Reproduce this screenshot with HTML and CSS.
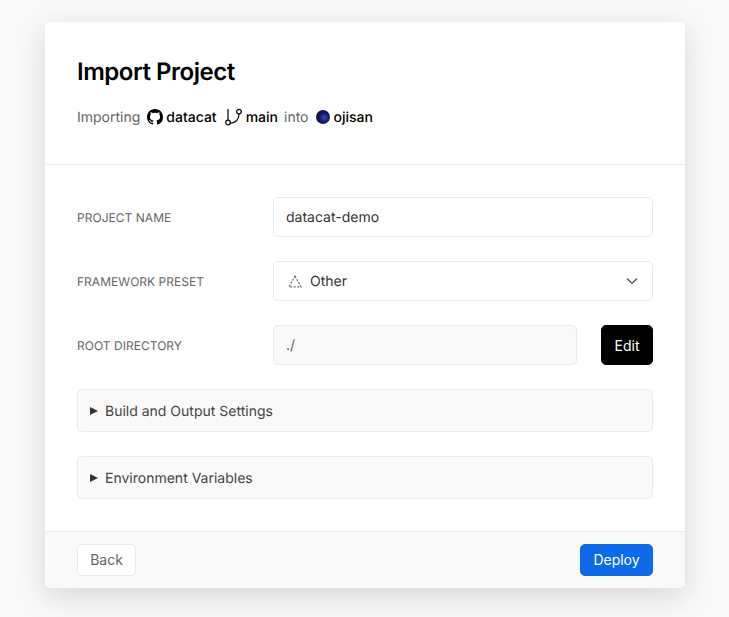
FILE: index.html
```html
<!DOCTYPE html>
<html lang="en">
<head>
<meta charset="utf-8">
<title>Import Project</title>
<link rel="stylesheet" href="styles.css">
</head>
<body>
<main class="card">
  <header class="head">
    <h1 class="title">Import Project</h1>
    <p class="meta">
      <span class="muted">Importing</span>
      <svg class="ic gh" viewBox="0 0 16 16" width="16" height="16"><path fill="#000" d="M8 0C3.58 0 0 3.58 0 8c0 3.54 2.29 6.53 5.47 7.59.4.07.55-.17.55-.38 0-.19-.01-.82-.01-1.49-2.01.37-2.53-.49-2.69-.94-.09-.23-.48-.94-.82-1.13-.28-.15-.68-.52-.01-.53.63-.01 1.08.58 1.23.82.72 1.21 1.87.87 2.33.66.07-.52.28-.87.51-1.07-1.78-.2-3.64-.89-3.64-3.95 0-.87.31-1.59.82-2.15-.08-.2-.36-1.02.08-2.12 0 0 .67-.21 2.2.82.64-.18 1.32-.27 2-.27s1.36.09 2 .27c1.53-1.04 2.2-.82 2.2-.82.44 1.1.16 1.92.08 2.12.51.56.82 1.27.82 2.15 0 3.07-1.87 3.75-3.65 3.95.29.25.54.73.54 1.48 0 1.07-.01 1.93-.01 2.2 0 .21.15.46.55.38A8.01 8.01 0 0 0 16 8c0-4.42-3.58-8-8-8z"/></svg>
      <b class="strong">datacat</b>
      <svg class="ic branch" viewBox="0 0 18 18" width="18" height="18" fill="none" stroke="#111" stroke-width="1.3"><circle cx="3" cy="14.5" r="2.3"/><circle cx="14" cy="3.6" r="2.3"/><path d="M3 12.2V1M5 15.4c5.2 0 9-3.8 9-9.5"/></svg>
      <b class="strong">main</b>
      <span class="muted">into</span>
      <span class="avatar"></span>
      <b class="strong">ojisan</b>
    </p>
  </header>

  <section class="form">
    <div class="row">
      <label class="label">PROJECT NAME</label>
      <div class="field">datacat-demo</div>
    </div>
    <div class="row">
      <label class="label">FRAMEWORK PRESET</label>
      <div class="field select">
        <svg class="tri" viewBox="0 0 14 13" width="14" height="13" fill="none" stroke="#666" stroke-width="1.2" stroke-dasharray="2 1.5"><path d="M7 1.2 13 11.8H1Z"/></svg>
        <span class="grow">Other</span>
        <svg class="chev" viewBox="0 0 12 8" width="12" height="8" fill="none" stroke="#555" stroke-width="1.2"><path d="M1 1.5 6 6.3l5-4.8"/></svg>
      </div>
    </div>
    <div class="row">
      <label class="label">ROOT DIRECTORY</label>
      <div class="field off">./</div>
      <button class="btn dark">Edit</button>
    </div>
    <div class="fold"><span class="arrow"></span>Build and Output Settings</div>
    <div class="fold"><span class="arrow"></span>Environment Variables</div>
  </section>

  <footer class="foot">
    <button class="btn light">Back</button>
    <button class="btn blue">Deploy</button>
  </footer>
</main>
</body>
</html>
```
FILE: styles.css
```css
* { box-sizing: border-box; }
html, body { margin: 0; height: 617px; overflow: hidden; }
body {
  background: #f9f9f9;
  font-family: Inter, "Liberation Sans", sans-serif;
  color: #333;
  font-size: 14px;
  padding: 22px 44px 0 45px;
  text-rendering: geometricPrecision;
}
.card {
  width: 640px;
  height: 566px;
  background: #fff;
  border-radius: 5px;
  box-shadow: 0 8px 30px rgba(0, 0, 0, 0.14);
  overflow: hidden;
  display: flex;
  flex-direction: column;
}
.head {
  height: 143px;
  padding: 32px 32px 0;
  border-bottom: 1px solid #eaeaea;
  flex: none;
}
.title {
  margin: 0;
  font-size: 24px;
  line-height: 36px;
  font-weight: 600;
  color: #000;
  letter-spacing: -0.47px;
}
.meta {
  margin: 18px 0 0;
  display: flex;
  align-items: center;
  height: 18px;
  font-size: 14px;
}
.muted { color: #666; }
.strong { font-weight: 500; color: #000; }
.ic { flex: none; }
.gh { margin: 0 3px 0 7px; }
.branch { margin: 0 3px 0 8px; }
.meta .muted + .avatar { margin-left: 8px; }
.meta .strong + .muted { margin-left: 6px; }
.avatar {
  width: 14px;
  height: 14px;
  border-radius: 50%;
  margin-right: 3px;
  background: radial-gradient(circle at 60% 55%, #3a4cc4 0, #1a1f6b 35%, #07071f 90%);
}
.form {
  flex: 1;
  padding: 32px 32px 0;
  display: flex;
  flex-direction: column;
}
.row {
  display: flex;
  align-items: center;
  height: 40px;
  margin-bottom: 24px;
}
.label {
  width: 196px;
  flex: none;
  font-size: 12px;
  color: #666;
  letter-spacing: 0.03px;
}
.field {
  flex: 1;
  height: 40px;
  border: 1px solid #eaeaea;
  border-radius: 5px;
  padding: 0 12px;
  display: flex;
  align-items: center;
  color: #333;
}
.select { padding-right: 14px; }
.grow { flex: 1; }
.tri { margin-right: 8px; margin-left: 2px; }
.off { background: #f9f9f9; color: #666; }
.btn {
  font: inherit;
  border-radius: 5px;
  display: flex;
  align-items: center;
  justify-content: center;
  padding: 0;
}
.dark {
  width: 52px;
  height: 40px;
  margin-left: 24px;
  background: #000;
  border: 1px solid #000;
  color: #fff;
}
.fold {
  height: 43px;
  margin-bottom: 24px;
  background: #f9f9f9;
  border: 1px solid #eaeaea;
  border-radius: 5px;
  padding: 1px 12px 0;
  display: flex;
  align-items: center;
  color: #444;
}
.arrow {
  width: 0;
  height: 0;
  border-left: 8px solid #333;
  border-top: 4.5px solid transparent;
  border-bottom: 4.5px solid transparent;
  margin-right: 7px;
}
.foot {
  height: 57px;
  flex: none;
  background: #f9f9f9;
  border-top: 1px solid #eaeaea;
  padding: 12px 32px 0;
  display: flex;
  justify-content: space-between;
  align-items: flex-start;
}
.light {
  width: 59px;
  height: 32px;
  padding-bottom: 1px;
  background: #fff;
  border: 1px solid #eaeaea;
  color: #666;
}
.blue {
  width: 73px;
  height: 32px;
  padding-bottom: 1px;
  background: #0a6ceb;
  border: 1px solid #0a6ceb;
  color: #fff;
}
```
